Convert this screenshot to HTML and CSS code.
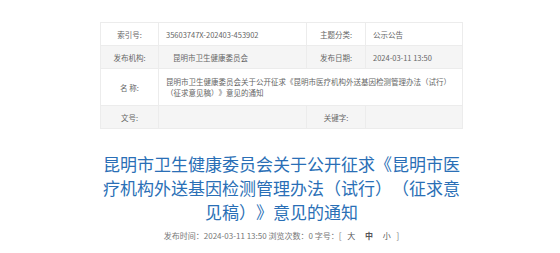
FILE: index.html
```html
<!DOCTYPE html>
<html lang="zh-CN">
<head>
    <meta charset="UTF-8">
    <title>信息公开</title>
    <link rel="stylesheet" href="styles.css">
</head>
<body>
    <div class="page">
        <table class="info">
            <tr class="row-a">
                <td class="label">索引号:</td>
                <td class="value">35603747X-202403-453902</td>
                <td class="label">主题分类:</td>
                <td class="value">公示公告</td>
            </tr>
            <tr class="row-b">
                <td class="label">发布机构:</td>
                <td class="value indent">昆明市卫生健康委员会</td>
                <td class="label">发布日期:</td>
                <td class="value">2024-03-11 13:50</td>
            </tr>
            <tr class="row-a tall">
                <td class="label">名 称:</td>
                <td class="value" colspan="3">昆明市卫生健康委员会关于公开征求《昆明市医疗机构外送基因检测管理办法（试行）（征求意见稿）》意见的通知</td>
            </tr>
            <tr class="row-b">
                <td class="label">文号:</td>
                <td class="value"></td>
                <td class="label">关键字:</td>
                <td class="value"></td>
            </tr>
        </table>

        <h1 class="title">昆明市卫生健康委员会关于公开征求《昆明市医疗机构外送基因检测管理办法（试行）（征求意见稿）》意见的通知</h1>

        <p class="meta">发布时间：2024-03-11 13:50 浏览次数：0 字号：[ <span class="size">大</span> <span class="size cur">中</span> <span class="size">小</span> ]</p>
    </div>
</body>
</html>
```

FILE: styles.css
```css
body {
    margin: 0;
    background: #fff;
    font-family: "Noto Sans CJK SC", "Noto Sans", sans-serif;
    text-spacing-trim: space-all;
}

.page {
    width: 363px;
    margin: 22px 0 0 100px;
}

.info {
    width: 100%;
    border-collapse: collapse;
    border: 1px solid #ececec;
    font-size: 7.5px;
    color: #666;
}

.info td {
    border: 1px solid #ececec;
    height: 22px;
    padding: 0 7px;
    line-height: 11px;
}

.info .tall td {
    height: 36px;
}

.row-b {
    background: #f5f5f5;
}

.label {
    width: 43px;
    text-align: center;
}

.info tr:first-child td:nth-child(2) {
    width: 133px;
}

.info tr:first-child td:nth-child(3) {
    width: 44px;
}

.indent {
    text-indent: 7px;
}

.title {
    margin: 23px 0 0;
    font-size: 17px;
    font-weight: normal;
    line-height: 24px;
    color: #2a6fb6;
    text-align: center;
}

.meta {
    margin: 5px 0 0;
    font-size: 8px;
    line-height: 14px;
    color: #777;
    text-align: center;
}

.size {
    margin: 0 4px;
    color: #555;
}

.cur {
    font-weight: bold;
}
```
